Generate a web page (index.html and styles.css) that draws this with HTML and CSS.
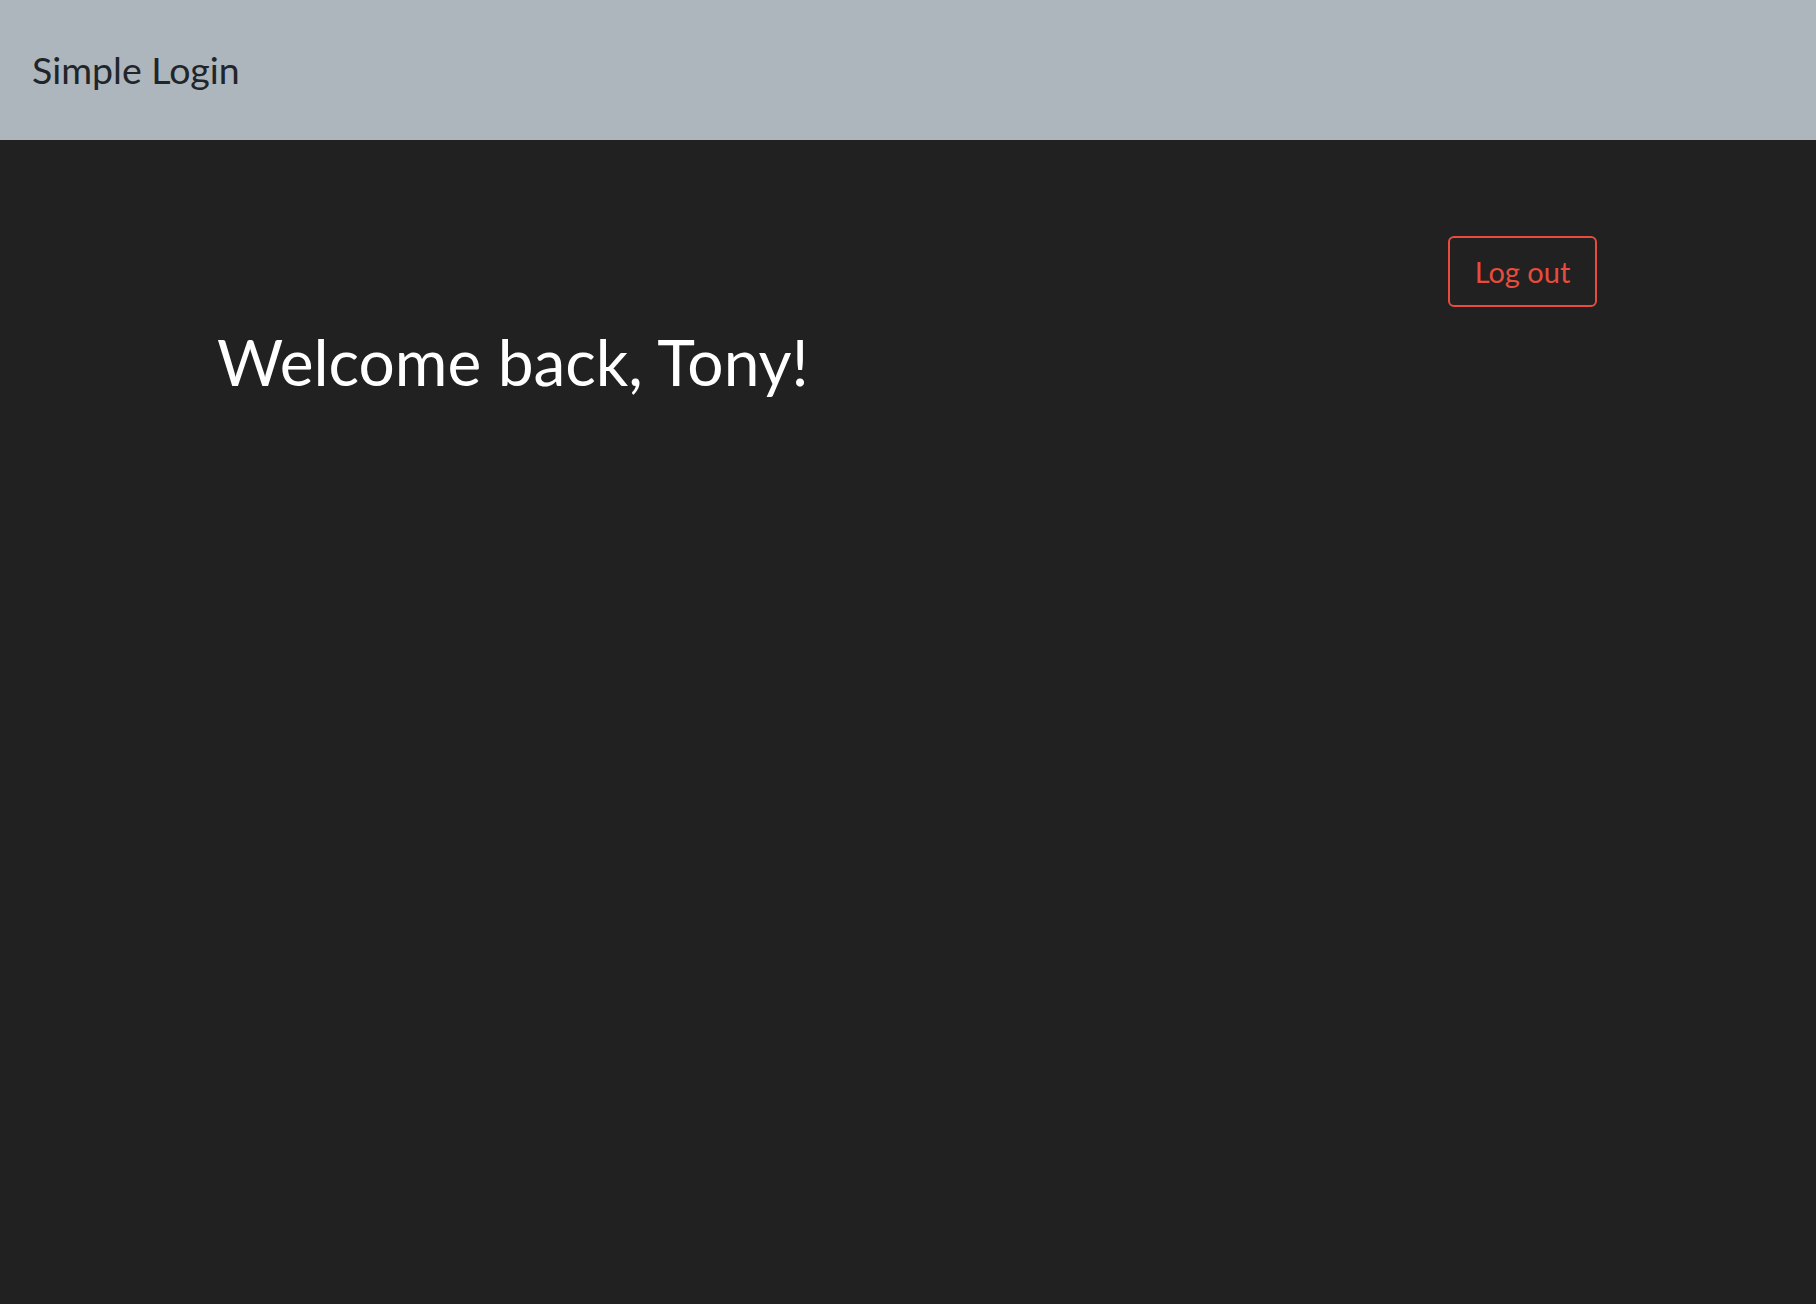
FILE: index.html
```html
<!DOCTYPE html>
<html>
<head>
<meta charset="utf-8">
<link rel="stylesheet" href="styles.css">
</head>
<body>
<header class="navbar">
  <span class="brand">Simple Login</span>
</header>
<main class="container">
  <div class="actions">
    <button class="btn-logout">Log out</button>
  </div>
  <h1 class="welcome">Welcome back, Tony!</h1>
</main>
</body>
</html>
```
FILE: styles.css
```css
html, body {
  margin: 0;
  padding: 0;
  background: #212121;
  font-family: Lato, "Open Sans", sans-serif;
  height: 100%;
}
.navbar {
  height: 140px;
  background: #adb5bd;
  display: flex;
  align-items: center;
  padding: 0 32px;
  box-sizing: border-box;
}
.brand {
  font-size: 37.5px;
  color: #212529;
  margin-top: -2px;
}
.container {
  width: 1378px;
  margin: 0 auto;
  box-sizing: border-box;
  padding: 96px 0 0 0;
}
.actions {
  display: flex;
  justify-content: flex-end;
}
.btn-logout {
  width: 149px;
  height: 71px;
  background: transparent;
  border: 2px solid #e74c3c;
  border-radius: 6px;
  color: #e74c3c;
  font-family: Lato, sans-serif;
  font-size: 29px;
  padding: 0 0 0 0;
  line-height: 1;
  padding-bottom: 0;
  cursor: pointer;
}
.welcome {
  margin: 17px 0 0 -2px;
  font-size: 64px;
  font-weight: 400;
  color: #ffffff;
  line-height: 1.2;
}
```
